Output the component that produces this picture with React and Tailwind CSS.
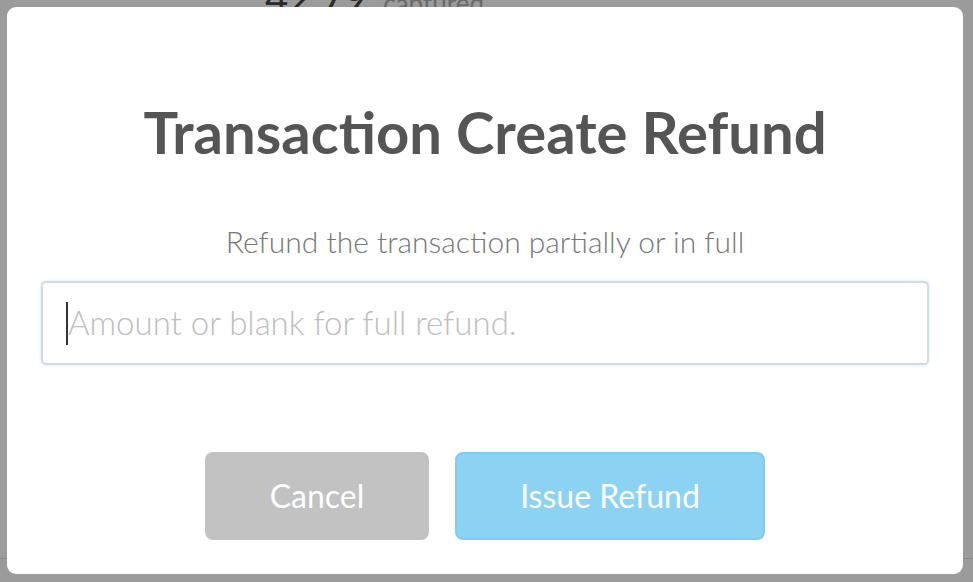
export default function App() {
  return (
    <div className="relative h-[582px] w-[973px] overflow-hidden bg-[#9b9b9b]" style={{ fontFamily: "Lato, 'Open Sans', sans-serif" }}>
      {/* background page (dimmed) */}
      <div className="flex items-baseline gap-[16px] pl-[265px] -mt-[22px] leading-none">
        <span className="text-[40px] text-[#2a2a2a]">42.79</span>
        <span className="text-[26px] text-[#6a6a6a]">captured</span>
      </div>
      <div className="mt-[540px] h-px w-full bg-[#8a8a8a]" />

      {/* modal */}
      <div className="absolute left-[7px] top-[7px] flex h-[567px] w-[956px] flex-col items-center rounded-[9px] bg-white px-[34px]">
        <h1 className="mt-[93px] text-[58px] font-bold leading-[64px] text-[#555555]">Transaction Create Refund</h1>
        <p className="mt-[59px] text-[30px] font-light leading-[36px] text-[#777777]">Refund the transaction partially or in full</p>
        <div className="mt-[22px] flex h-[84px] w-full items-center rounded-[5px] border-2 border-[#d6dadd] pl-[23px] shadow-[0_0_3px_rgba(140,200,240,0.5)]">
          <span className="h-[43px] w-[2px] bg-[#333]" />
          <span className="text-[33px] font-light text-[#bdbdbd]">Amount or blank for full refund.</span>
        </div>
        <div className="mt-[87px] flex gap-[26px]">
          <button className="flex h-[88px] w-[224px] items-center justify-center rounded-[8px] bg-[#c2c2c2] text-[32px] text-white">Cancel</button>
          <button className="flex h-[88px] w-[310px] items-center justify-center rounded-[8px] border-2 border-[#80cbef] bg-[#8cd3f3] text-[32px] text-white">Issue Refund</button>
        </div>
      </div>
    </div>
  );
}
